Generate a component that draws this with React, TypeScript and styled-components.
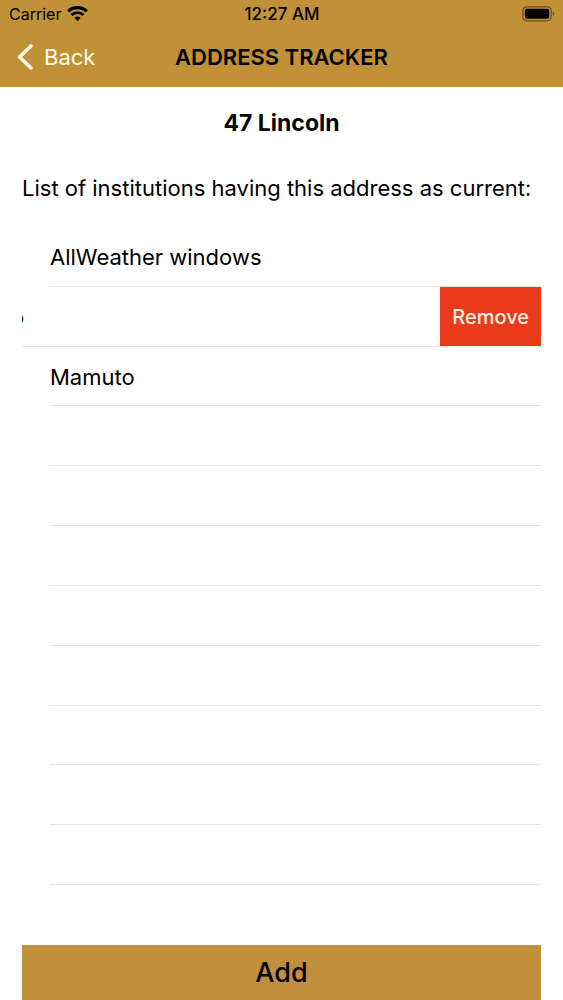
import React from "react";
import styled, { createGlobalStyle } from "styled-components";

const GlobalStyle = createGlobalStyle`
  *, *::before, *::after { box-sizing: border-box; }
  body {
    margin: 0;
    background: #fff;
    color: #000;
    font-family: Inter, "Liberation Sans", sans-serif;
    font-size: 22px;
  }
  button { font: inherit; border: 0; margin: 0; cursor: pointer; }
`;

const Screen = styled.div`
  display: flex;
  flex-direction: column;
  min-height: 100vh;
`;

const Header = styled.header`
  background: #c19138;
`;

const Columns = styled.div`
  display: grid;
  grid-template-columns: 1fr auto 1fr;
  align-items: center;
`;

const StatusBar = styled(Columns)`
  height: 28px;
  padding: 0 8px 0 9px;
  font-size: 16px;
`;

const Carrier = styled.div`
  display: flex;
  align-items: center;
  gap: 6px;
`;

const Clock = styled.time`
  font-size: 17px;
  font-weight: 500;
`;

const BatteryIcon = styled.svg`
  justify-self: end;
`;

const NavBar = styled(Columns)`
  height: 59px;
  padding: 0 16px 2px;
`;

const BackButton = styled.button`
  display: flex;
  align-items: center;
  gap: 10px;
  padding: 0;
  background: none;
  color: #fffbe8;
`;

const Title = styled.h1`
  margin: 0;
  font-size: 22px;
  font-weight: 600;
`;

const Main = styled.main`
  flex: 1;
  display: flex;
  flex-direction: column;
  padding: 0 22px;
`;

const Address = styled.h2`
  margin: 22px 0 0;
  font-size: 23px;
  line-height: 28px;
  font-weight: 700;
  text-align: center;
`;

const Intro = styled.p`
  margin: 37px 0 0;
  line-height: 28px;
  white-space: nowrap;
`;

const List = styled.ul`
  flex: 1;
  display: grid;
  grid-auto-rows: minmax(48px, 1fr);
  margin: 25px 0 60px;
  padding: 0;
  list-style: none;
`;

const Row = styled.li<{ $swiped?: boolean }>`
  display: flex;
  align-items: center;
  justify-content: space-between;
  overflow: hidden;
  margin-left: ${(p) => (p.$swiped ? 0 : 28)}px;
  border-bottom: 1px solid #e4e4e6;
`;

const Name = styled.span<{ $swiped?: boolean }>`
  padding-top: 2px;
  margin-left: ${(p) => (p.$swiped ? -11 : 0)}px;
`;

const RemoveButton = styled.button`
  align-self: stretch;
  padding: 2px 12px 0;
  background: #e93b1b;
  color: #fff0e4;
  font-size: 20px;
  font-weight: 500;
`;

const AddButton = styled.button`
  height: 55px;
  background: #c0903e;
  color: #000;
  font-size: 27px;
  font-weight: 500;
`;

const EMPTY_ROWS = 8;

export default function App() {
  return (
    <Screen>
      <GlobalStyle />
      <Header>
        <StatusBar>
          <Carrier>
            Carrier
            <svg width="21" height="16" viewBox="0 0 21 16" fill="none" stroke="#000" aria-hidden="true">
              <path d="M1.2 5.4a13.4 13.4 0 0 1 18.6 0" strokeWidth="3.2" />
              <path d="M4.5 9.1a8.4 8.4 0 0 1 12 0" strokeWidth="2.9" />
              <path d="M10.5 15l-3.1-3.1a4.5 4.5 0 0 1 6.2 0z" fill="#000" stroke="none" />
            </svg>
          </Carrier>
          <Clock>12:27 AM</Clock>
          <BatteryIcon width="33" height="16" viewBox="0 0 33 16" aria-hidden="true">
            <rect x="0.8" y="0.8" width="28.4" height="14" rx="4" fill="none" stroke="#6b4f18" strokeWidth="1.2" />
            <rect x="2.8" y="2.8" width="24.4" height="10" rx="2" fill="#000" />
            <path d="M30.8 5.6c2 .8 2 3.6 0 4.4z" fill="#6b4f18" />
          </BatteryIcon>
        </StatusBar>
        <NavBar>
          <BackButton type="button">
            <svg width="18" height="28" viewBox="0 0 18 28" fill="none" stroke="currentColor" strokeWidth="3.6" strokeLinecap="round" strokeLinejoin="round" aria-hidden="true">
              <path d="M15 3L3.5 14L15 25" />
            </svg>
            Back
          </BackButton>
          <Title>ADDRESS TRACKER</Title>
        </NavBar>
      </Header>
      <Main>
        <Address>47 Lincoln</Address>
        <Intro>List of institutions having this address as current:</Intro>
        <List>
          <Row>
            <Name>AllWeather windows</Name>
          </Row>
          <Row $swiped>
            <Name $swiped>o</Name>
            <RemoveButton type="button">Remove</RemoveButton>
          </Row>
          <Row>
            <Name>Mamuto</Name>
          </Row>
          {Array.from({ length: EMPTY_ROWS }, (_, i) => (
            <Row key={i} aria-hidden="true" />
          ))}
        </List>
        <AddButton type="button">Add</AddButton>
      </Main>
    </Screen>
  );
}
